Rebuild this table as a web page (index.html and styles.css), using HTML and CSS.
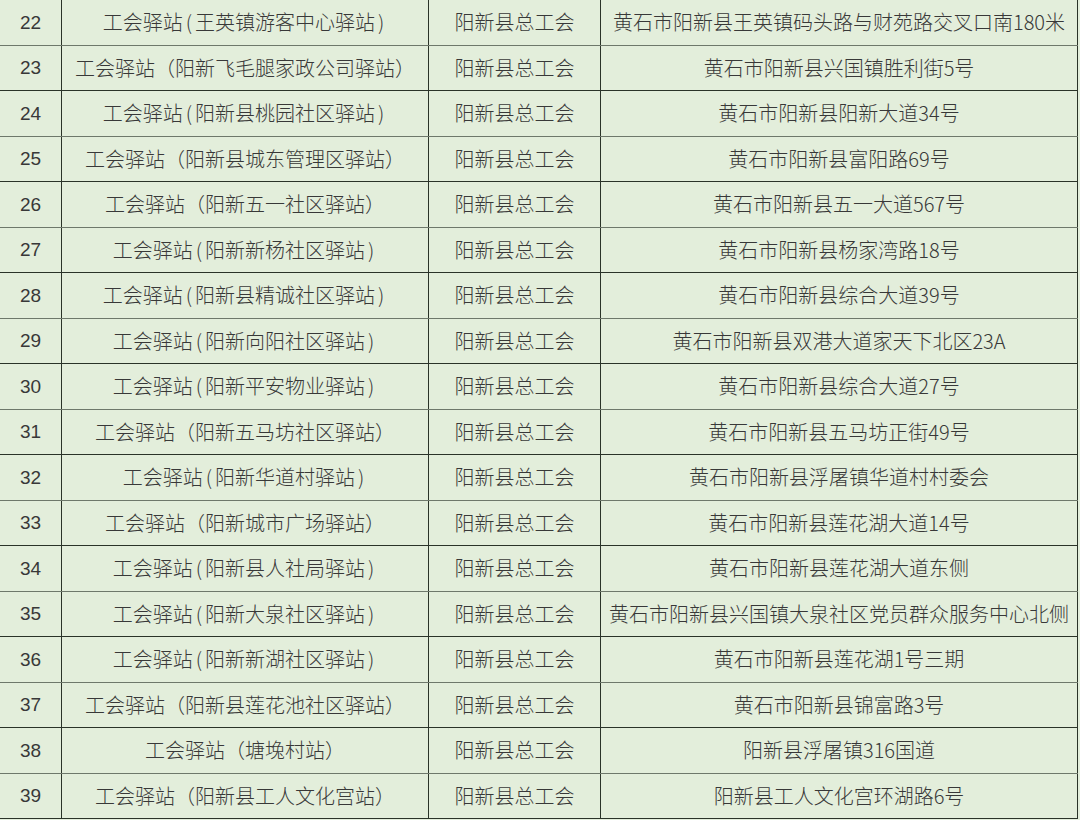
FILE: index.html
```html
<!DOCTYPE html>
<html lang="zh-CN">
<head>
<meta charset="utf-8">
<title>工会驿站</title>
<link rel="stylesheet" href="styles.css">
</head>
<body>
<table class="sheet">
<colgroup><col class="c-no"><col class="c-name"><col class="c-org"><col class="c-addr"></colgroup>
<tbody>
<tr><td>22</td><td>工会驿站<span class="hp">(</span>王英镇游客中心驿站<span class="hp">)</span></td><td>阳新县总工会</td><td>黄石市阳新县王英镇码头路与财苑路交叉口南180米</td></tr>
<tr><td>23</td><td>工会驿站（阳新飞毛腿家政公司驿站）</td><td>阳新县总工会</td><td>黄石市阳新县兴国镇胜利街5号</td></tr>
<tr><td>24</td><td>工会驿站<span class="hp">(</span>阳新县桃园社区驿站<span class="hp">)</span></td><td>阳新县总工会</td><td>黄石市阳新县阳新大道34号</td></tr>
<tr><td>25</td><td>工会驿站（阳新县城东管理区驿站）</td><td>阳新县总工会</td><td>黄石市阳新县富阳路69号</td></tr>
<tr><td>26</td><td>工会驿站（阳新五一社区驿站）</td><td>阳新县总工会</td><td>黄石市阳新县五一大道567号</td></tr>
<tr><td>27</td><td>工会驿站<span class="hp">(</span>阳新新杨社区驿站<span class="hp">)</span></td><td>阳新县总工会</td><td>黄石市阳新县杨家湾路18号</td></tr>
<tr><td>28</td><td>工会驿站<span class="hp">(</span>阳新县精诚社区驿站<span class="hp">)</span></td><td>阳新县总工会</td><td>黄石市阳新县综合大道39号</td></tr>
<tr><td>29</td><td>工会驿站<span class="hp">(</span>阳新向阳社区驿站<span class="hp">)</span></td><td>阳新县总工会</td><td>黄石市阳新县双港大道家天下北区23A</td></tr>
<tr><td>30</td><td>工会驿站<span class="hp">(</span>阳新平安物业驿站<span class="hp">)</span></td><td>阳新县总工会</td><td>黄石市阳新县综合大道27号</td></tr>
<tr><td>31</td><td>工会驿站（阳新五马坊社区驿站）</td><td>阳新县总工会</td><td>黄石市阳新县五马坊正街49号</td></tr>
<tr><td>32</td><td>工会驿站<span class="hp">(</span>阳新华道村驿站<span class="hp">)</span></td><td>阳新县总工会</td><td>黄石市阳新县浮屠镇华道村村委会</td></tr>
<tr><td>33</td><td>工会驿站（阳新城市广场驿站）</td><td>阳新县总工会</td><td>黄石市阳新县莲花湖大道14号</td></tr>
<tr><td>34</td><td>工会驿站<span class="hp">(</span>阳新县人社局驿站<span class="hp">)</span></td><td>阳新县总工会</td><td>黄石市阳新县莲花湖大道东侧</td></tr>
<tr><td>35</td><td>工会驿站<span class="hp">(</span>阳新大泉社区驿站<span class="hp">)</span></td><td>阳新县总工会</td><td>黄石市阳新县兴国镇大泉社区党员群众服务中心北侧</td></tr>
<tr><td>36</td><td>工会驿站<span class="hp">(</span>阳新新湖社区驿站<span class="hp">)</span></td><td>阳新县总工会</td><td>黄石市阳新县莲花湖1号三期</td></tr>
<tr><td>37</td><td>工会驿站（阳新县莲花池社区驿站）</td><td>阳新县总工会</td><td>黄石市阳新县锦富路3号</td></tr>
<tr><td>38</td><td>工会驿站（塘堍村站）</td><td>阳新县总工会</td><td>阳新县浮屠镇316国道</td></tr>
<tr><td>39</td><td>工会驿站（阳新县工人文化宫站）</td><td>阳新县总工会</td><td>阳新县工人文化宫环湖路6号</td></tr>
</tbody>
</table>
</body>
</html>
```
FILE: styles.css
```css
html, body {
  margin: 0;
  padding: 0;
  background: #e3eedb;
}
body {
  width: 1080px;
  height: 820px;
  overflow: hidden;
  font-family: "Noto Sans CJK SC", "Liberation Sans", sans-serif;
  color: #383838;
}
.sheet {
  border-collapse: collapse;
  table-layout: fixed;
  width: 1078px;
  margin-top: -1px;
  margin-left: -1px;
  background: #e3eedb;
}
.c-no { width: 62px; }
.c-name { width: 367px; }
.c-org { width: 172px; }
.c-addr { width: 477px; }
.sheet td {
  height: 44.5px;
  padding: 0;
  border: 1.5px solid #2a3328;
  text-align: center;
  vertical-align: middle;
  font-size: 20px;
  font-weight: 300;
  white-space: nowrap;
  line-height: 1;
}
.sheet tr:nth-child(odd) td { border-bottom-color: #6e786b; }
.sheet td:first-child { font-family: "Liberation Sans", sans-serif; font-size: 19px; }
.hp {
  display: inline-block;
  padding: 0 3px;
}
```
